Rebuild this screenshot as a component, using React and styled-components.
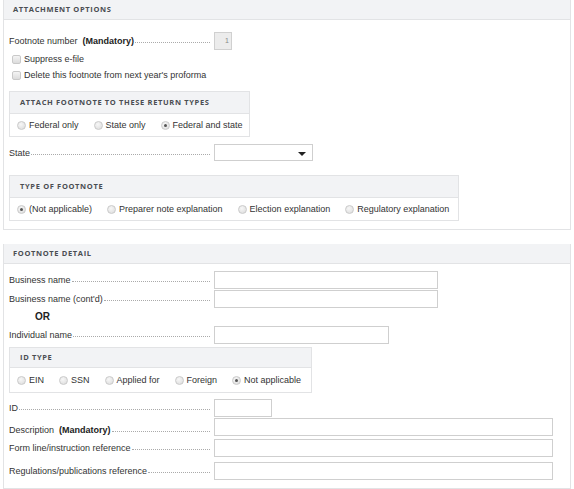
import React from "react";
import styled, { createGlobalStyle, css } from "styled-components";

const GlobalStyle = createGlobalStyle`
  html, body { margin: 0; padding: 0; background: #fff; }
  body {
    font-family: "Liberation Sans", Arial, sans-serif;
    font-size: 9px;
    color: #333;
  }
`;

const Page = styled.div`
  padding: 0 3px;
  width: 568px;
`;

const Panel = styled.section`
  border: 1px solid #e2e3e5;
  border-top: none;
  margin-bottom: ${(p) => p.$mb || 0}px;
`;

const headerText = css`
  font-family: "Open Sans", "Noto Sans", sans-serif;
  font-weight: 700;
  font-size: 7.5px;
  letter-spacing: 0.65px;
  text-transform: uppercase;
  color: #4a4d52;
`;

const PanelHeader = styled.div`
  height: 19px;
  line-height: 19px;
  background: #f2f3f5;
  border-bottom: 1px solid #e2e3e5;
  padding-left: 9px;
  ${headerText}
`;

const PanelBody = styled.div`
  padding: ${(p) => p.$pad || "12px 5px 8px 5px"};
  display: flex;
  flex-direction: column;
`;

const SubPanel = styled.div`
  border: 1px solid #e2e3e5;
  width: ${(p) => p.$w}px;
  box-sizing: border-box;
  margin-top: ${(p) => p.$mt || 0}px;
  margin-bottom: ${(p) => p.$mb || 0}px;
`;

const SubHeader = styled.div`
  height: ${(p) => p.$h || 21}px;
  line-height: ${(p) => p.$h || 21}px;
  background: #f2f3f5;
  border-bottom: 1px solid #e2e3e5;
  padding-left: 10px;
  ${headerText}
`;

const RadioRow = styled.div`
  height: ${(p) => p.$h || 22}px;
  display: flex;
  align-items: center;
  padding-left: 7px;
  gap: ${(p) => p.$gap || 15}px;
`;

const Option = styled.label`
  display: flex;
  align-items: center;
  gap: 3px;
  color: #333;
  white-space: nowrap;
`;

const RadioDot = styled.span`
  width: 7px;
  height: 7px;
  border-radius: 50%;
  border: 1px solid #cacaca;
  background: radial-gradient(circle at 40% 35%, #f7f7f7, #dadada);
  position: relative;
  flex: none;
  ${(p) =>
    p.$on &&
    css`
      &::after {
        content: "";
        position: absolute;
        left: 2px;
        top: 2px;
        width: 3px;
        height: 3px;
        border-radius: 50%;
        background: #555;
      }
    `}
`;

const CheckRow = styled.label`
  display: flex;
  align-items: center;
  gap: 3px;
  height: 16px;
  padding-left: 3px;
`;

const CheckBox = styled.span`
  width: 7px;
  height: 7px;
  border: 1px solid #c9c9c9;
  border-radius: 2px;
  background: linear-gradient(#f4f4f4, #dcdcdc);
  flex: none;
`;

const FieldRow = styled.div`
  display: flex;
  align-items: center;
  height: ${(p) => p.$h || 18}px;
  margin-top: ${(p) => p.$mt || 0}px;
`;

const Label = styled.div`
  width: 201px;
  margin-right: 4px;
  display: flex;
  align-items: baseline;
  white-space: nowrap;
  overflow: hidden;
  padding-top: ${(p) => p.$dy || 0}px;
`;

const Strong = styled.b`
  margin-left: 5px;
  font-weight: 700;
  color: #222;
`;

const Leader = styled.span`
  flex: 1;
  border-bottom: 1px dotted #aaa;
  margin-left: 1px;
  min-width: 4px;
  transform: translateY(-1px);
`;

const TextInput = styled.div`
  width: ${(p) => p.$w}px;
  height: ${(p) => p.$h || 16}px;
  border: 1px solid #cfcfcf;
  background: #fff;
  flex: none;
`;

const NumberBox = styled.div`
  width: 14px;
  height: 16px;
  border: 1px solid #d0d0d0;
  background: #ececec;
  font-size: 7px;
  color: #888;
  text-align: right;
  line-height: 16px;
  padding-right: 2px;
`;

const Select = styled.div`
  width: 97px;
  height: 15px;
  border: 1px solid #cfcfcf;
  background: #fff;
  position: relative;
  &::after {
    content: "";
    position: absolute;
    right: 6px;
    top: 7px;
    border-left: 4px solid transparent;
    border-right: 4px solid transparent;
    border-top: 4px solid #222;
  }
`;

const OrText = styled.div`
  font-weight: 700;
  font-size: 10px;
  color: #222;
  padding-left: 26px;
  height: 18px;
  line-height: 18px;
`;

function Radio({ on, children }) {
  return (
    <Option>
      <RadioDot $on={on} />
      {children}
    </Option>
  );
}

function Field({ label, strong, children, h, mt, dy }) {
  return (
    <FieldRow $h={h} $mt={mt}>
      <Label $dy={dy}>
        {label}
        {strong && <Strong>{strong}</Strong>}
        <Leader />
      </Label>
      {children}
    </FieldRow>
  );
}

export default function App() {
  return (
    <>
      <GlobalStyle />
      <Page>
        <Panel $mb={14}>
          <PanelHeader>Attachment options</PanelHeader>
          <PanelBody $pad="12px 5px 8px 5px">
            <Field label="Footnote number" strong="(Mandatory)" h={18}>
              <NumberBox>1</NumberBox>
            </Field>
            <CheckRow style={{ marginTop: 1 }}>
              <CheckBox />
              Suppress e-file
            </CheckRow>
            <CheckRow>
              <CheckBox />
              Delete this footnote from next year's proforma
            </CheckRow>
            <SubPanel $w={241} $mt={8}>
              <SubHeader>Attach footnote to these return types</SubHeader>
              <RadioRow $gap={15}>
                <Radio>Federal only</Radio>
                <Radio>State only</Radio>
                <Radio on>Federal and state</Radio>
              </RadioRow>
            </SubPanel>
            <Field label="State" h={17} mt={7}>
              <Select />
            </Field>
            <SubPanel $w={450} $mt={14}>
              <SubHeader>Type of footnote</SubHeader>
              <RadioRow $gap={15}>
                <Radio on>(Not applicable)</Radio>
                <Radio>Preparer note explanation</Radio>
                <Radio>Election explanation</Radio>
                <Radio>Regulatory explanation</Radio>
              </RadioRow>
            </SubPanel>
          </PanelBody>
        </Panel>

        <Panel>
          <PanelHeader>Footnote detail</PanelHeader>
          <PanelBody $pad="7px 5px 8px 5px">
            <Field label="Business name" h={18}>
              <TextInput $w={222} />
            </Field>
            <Field label="Business name (cont'd)" h={18} mt={1}>
              <TextInput $w={222} />
            </Field>
            <OrText>OR</OrText>
            <Field label="Individual name" h={18}>
              <TextInput $w={173} />
            </Field>
            <SubPanel $w={303} $mt={3}>
              <SubHeader $h={19}>ID type</SubHeader>
              <RadioRow $h={24} $gap={15}>
                <Radio>EIN</Radio>
                <Radio>SSN</Radio>
                <Radio>Applied for</Radio>
                <Radio>Foreign</Radio>
                <Radio on>Not applicable</Radio>
              </RadioRow>
            </SubPanel>
            <Field label="ID" h={18} mt={6}>
              <TextInput $w={56} />
            </Field>
            <Field label="Description" strong="(Mandatory)" h={18} mt={1} dy={5}>
              <TextInput $w={337} />
            </Field>
            <Field label="Form line/instruction reference" h={18} mt={3}>
              <TextInput $w={337} />
            </Field>
            <Field label="Regulations/publications reference" h={18} mt={5}>
              <TextInput $w={337} />
            </Field>
          </PanelBody>
        </Panel>
      </Page>
    </>
  );
}
